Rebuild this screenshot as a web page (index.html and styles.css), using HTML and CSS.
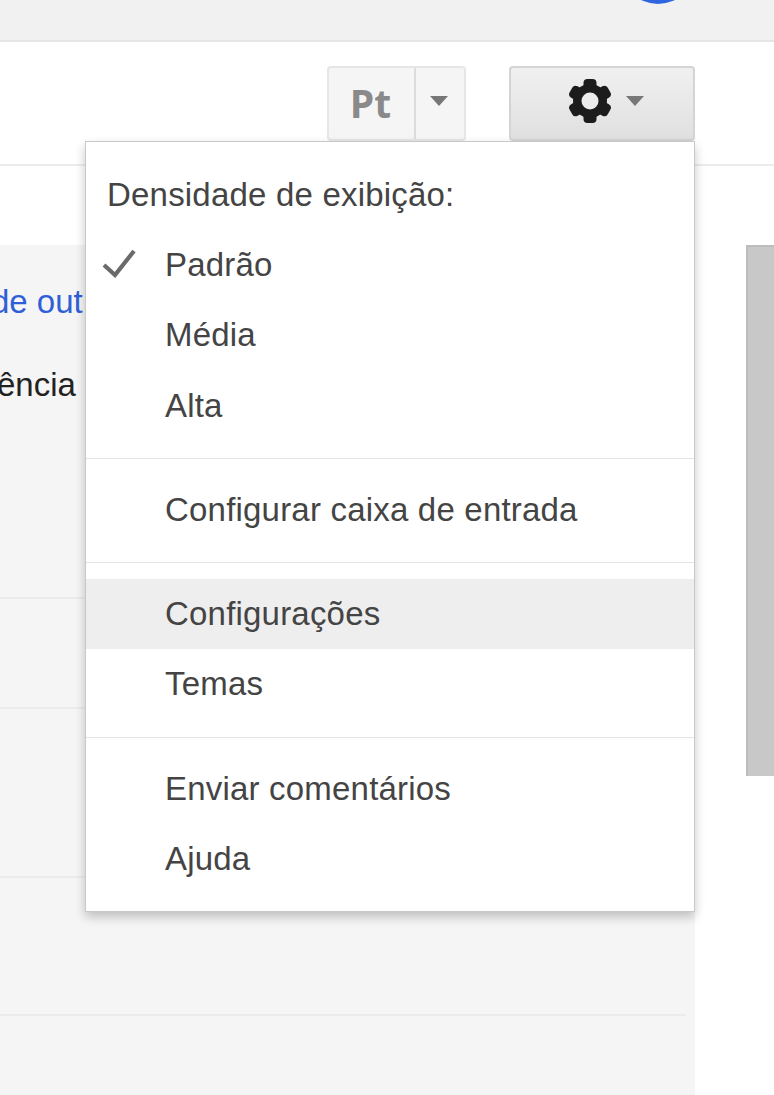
FILE: index.html
```html
<!DOCTYPE html>
<html lang="pt">
<head>
<meta charset="utf-8">
<title>Configurações</title>
<link rel="stylesheet" href="styles.css">
</head>
<body>
<div class="page">
  <header class="topbar"><span class="avatar"></span></header>
  <div class="toolbar">
    <div class="lang">
      <button class="lang-main">Pt</button>
      <button class="lang-arrow"><span class="caret"></span></button>
    </div>
    <button class="gear-btn">
      <svg class="gear" viewBox="0 0 44 44" width="44" height="44" aria-hidden="true">
        <g fill="#1c1c1c">
          <rect x="15.5" y="0" width="13" height="44" rx="4"/>
          <rect x="15.5" y="0" width="13" height="44" rx="4" transform="rotate(60 22 22)"/>
          <rect x="15.5" y="0" width="13" height="44" rx="4" transform="rotate(120 22 22)"/>
          <circle cx="22" cy="22" r="17"/>
        </g>
        <circle cx="22" cy="22" r="8.5" fill="#ececec"/>
      </svg>
      <span class="caret"></span>
    </button>
  </div>
  <div class="content">
    <main class="list">
      <section class="row row-first">
        <p class="link-line">de out</p>
        <p class="text-line">ência</p>
      </section>
      <section class="row row-b"></section>
      <section class="row row-c"></section>
      <section class="row row-d"></section>
      <section class="row row-e"></section>
    </main>
    <aside class="rail"><div class="thumb"></div></aside>
  </div>

  <nav class="menu">
    <div class="menu-head">Densidade de exibição:</div>
    <div class="item">
      <svg class="check" viewBox="0 0 36 30" width="36" height="30" aria-hidden="true"><path d="M3 17 L14 27 L33 3" fill="none" stroke="#6a6a6a" stroke-width="4.2"/></svg>
      Padrão
    </div>
    <div class="item">Média</div>
    <div class="item">Alta</div>
    <hr class="sep">
    <div class="item">Configurar caixa de entrada</div>
    <hr class="sep">
    <div class="item active">Configurações</div>
    <div class="item">Temas</div>
    <hr class="sep">
    <div class="item">Enviar comentários</div>
    <div class="item">Ajuda</div>
  </nav>
</div>
</body>
</html>
```
FILE: styles.css
```css
* { box-sizing: border-box; }
html, body { margin: 0; padding: 0; }
body {
  background: #fff;
  font-family: "Liberation Sans", Arial, sans-serif;
  overflow: hidden;
}
.page {
  position: relative;
  width: 774px;
  height: 1095px;
  overflow: hidden;
  display: flex;
  flex-direction: column;
}
.topbar {
  height: 42px;
  flex: none;
  background: #f1f1f1;
  border-bottom: 2px solid #e6e6e6;
  display: flex;
  justify-content: flex-end;
  padding-right: 78px;
  overflow: hidden;
}
.avatar {
  width: 76px;
  height: 76px;
  margin-top: -72px;
  border-radius: 50%;
  background: #2f66e0;
}
.toolbar {
  height: 124px;
  flex: none;
  display: flex;
  justify-content: flex-end;
  gap: 43px;
  padding: 24px 79px 0 0;
  border-bottom: 2px solid #ececec;
}
button { font: inherit; padding: 0; margin: 0; }
.lang {
  display: flex;
  width: 139px;
  height: 75px;
  background: #f5f5f5;
  border: 2px solid #e6e6e6;
  border-radius: 4px;
}
.lang-main {
  width: 87px;
  border: 0;
  border-right: 2px solid #dcdcdc;
  background: transparent;
  color: #8a8a8a;
  font-size: 39px;
  font-weight: 700;
  font-family: "Open Sans", "Liberation Sans", sans-serif;
  line-height: 1;
  padding: 0 2px 3px 0;
}
.lang-arrow {
  flex: 1;
  border: 0;
  background: transparent;
  display: flex;
  align-items: center;
  justify-content: center;
  padding: 0 3px 5px 0;
}
.caret {
  width: 0;
  height: 0;
  border-left: 9px solid transparent;
  border-right: 9px solid transparent;
  border-top: 10px solid #777;
}
.gear-btn {
  width: 186px;
  height: 75px;
  border: 2px solid #d4d4d4;
  border-radius: 4px;
  background: linear-gradient(#f0f0f0, #e0e0e0);
  display: flex;
  align-items: center;
  justify-content: center;
  gap: 14px;
  padding: 0 0 6px 8px;
}
.content {
  flex: 1;
  display: flex;
  padding-top: 79px;
}
.list {
  width: 695px;
  flex: none;
  background: #f5f5f5;
  display: flex;
  flex-direction: column;
}
.row {
  flex: none;
  margin-right: 9px;
  border-bottom: 2px solid #ebebeb;
}
.row-first { height: 354px; padding-top: 35px; font-size: 33px; }
.row-b { height: 110px; }
.row-c { height: 169px; }
.row-d { height: 138px; }
.row-e { height: 80px; border-bottom: 0; }
.row p { margin: 0; line-height: 44px; white-space: nowrap; }
.row .link-line { color: #2f5fd8; margin-left: -9px; }
.row .text-line { color: #222; margin-top: 39px; margin-left: -3px; }
.rail {
  flex: 1;
  padding-left: 51px;
}
.thumb {
  height: 531px;
  background: #c8c8c8;
  border-left: 2px solid #bdbdbd;
  border-top: 2px solid #bdbdbd;
}
.menu {
  position: absolute;
  left: 85px;
  top: 141px;
  width: 610px;
  height: 771px;
  background: #fff;
  border: 1px solid #c8c8c8;
  padding: 18px 0;
  box-shadow: 0 5px 10px rgba(0, 0, 0, 0.22);
  color: #444;
  font-size: 33px;
  letter-spacing: 0.2px;
}
.menu-head {
  height: 70px;
  line-height: 70px;
  padding-left: 21px;
}
.item {
  position: relative;
  height: 70.3px;
  line-height: 70px;
  padding-left: 79px;
  white-space: nowrap;
}
.item.active { background: #eeeeee; }
.check {
  position: absolute;
  left: 15px;
  top: 18px;
}
.sep {
  border: 0;
  height: 1px;
  background: #e4e4e4;
  margin: 17px 0 16px;
}
```
